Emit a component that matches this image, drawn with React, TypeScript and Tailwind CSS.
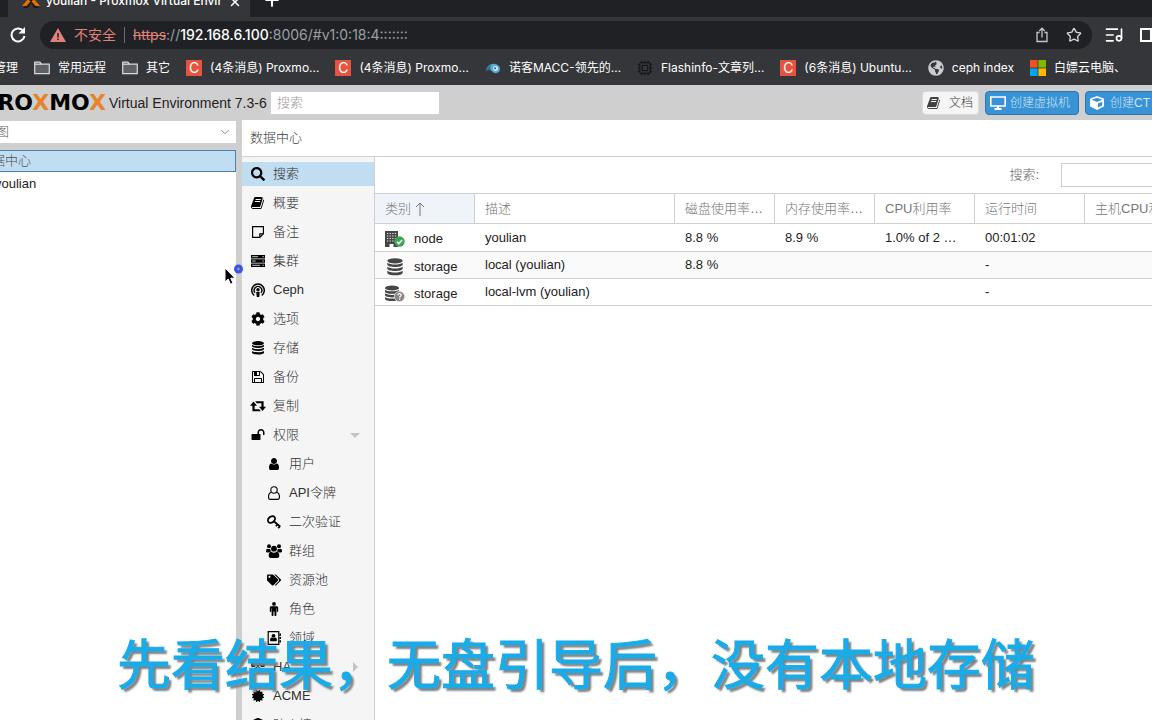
import type { ReactNode } from 'react';
import { ChevronDown, Cpu, ListMusic, Plus, Star, X } from 'lucide-react';
import { FaCertificate, FaCog, FaCube, FaGlobeAmericas, FaHeartbeat, FaSearch, FaShieldAlt, FaTags } from 'react-icons/fa';

const Glyph = ({ d, className = 'w-3.5 h-3.5' }: { d: string; className?: string }) => (
  <svg viewBox="0 0 1792 1792" className={className} fill="currentColor" aria-hidden="true">
    <path d={d} />
  </svg>
);

const BOOK =
  'M1639 478q40 57 18 129l-275 906q-19 64-76.5 107.5t-122.5 43.5h-923q-77 0-148.5-53.5t-99.5-131.5q-24-67-2-127 0-4 3-27t4-37q1-8-3-21.5t-3-19.5q2-11 8-21t16.5-23.5 16.5-23.5q23-38 45-91.5t30-91.5q3-10 .5-30t-.5-28q3-11 17-28t17-23q21-36 42-92t25-90q1-9-2.5-32t.5-28q4-13 22-30.5t22-22.5q19-26 42.5-84.5t27.5-96.5q1-8-3-25.5t-2-26.5q2-8 9-18t18-23 17-21q8-12 16.5-30.5t15-35 16-36 19.5-32 26.5-23.5 36-11.5 47.5 5.5l-1 3q38-9 51-9h761q74 0 114 56t18 130l-274 906q-36 119-71.5 153.5t-128.5 34.5h-869q-27 0-38 15-11 16-1 43 24 70 144 70h923q29 0 56-15.5t35-41.5l300-987q7-22 5-57 38 15 59 43zm-1064 2q-4 13 2 22.5t20 9.5h608q13 0 25.5-9.5t16.5-22.5l21-64q4-13-2-22.5t-20-9.5h-608q-13 0-25.5 9.5t-16.5 22.5zm-83 256q-4 13 2 22.5t20 9.5h608q13 0 25.5-9.5t16.5-22.5l21-64q4-13-2-22.5t-20-9.5h-608q-13 0-25.5 9.5t-16.5 22.5z';
const FLOPPY =
  'M512 1536h768v-384h-768v384zm896 0h128v-896q0-14-10-38.5t-20-34.5l-281-281q-10-10-34-20t-39-10v416q0 40-28 68t-68 28h-576q-40 0-68-28t-28-68v-416h-128v1280h128v-416q0-40 28-68t68-28h832q40 0 68 28t28 68v416zm-384-928v-320q0-13-9.5-22.5t-22.5-9.5h-192q-13 0-22.5 9.5t-9.5 22.5v320q0 13 9.5 22.5t22.5 9.5h192q13 0 22.5-9.5t9.5-22.5zm640 32v928q0 40-28 68t-68 28h-1344q-40 0-68-28t-28-68v-1344q0-40 28-68t68-28h928q40 0 88 20t76 48l280 280q28 28 48 76t20 88z';
const UNLOCK =
  'M1728 576v256q0 26-19 45t-45 19h-64q-26 0-45-19t-19-45v-256q0-106-75-181t-181-75-181 75-75 181v192h96q40 0 68 28t28 68v576q0 40-28 68t-68 28h-960q-40 0-68-28t-28-68v-576q0-40 28-68t68-28h672v-192q0-185 131.5-316.5t316.5-131.5 316.5 131.5 131.5 316.5z';
const USER =
  'M1536 1399q0 109-62.5 187t-150.5 78h-854q-88 0-150.5-78t-62.5-187q0-85 8.500-160.500t31.500-152 58.500-131 94-89 134.500-34.500q131 128 313 128t313-128q76 0 134.500 34.500t94 89 58.500 131 31.500 152 8.500 160.500zm-256-887q0 159-112.500 271.500t-271.500 112.500-271.500-112.500-112.500-271.500 112.500-271.500 271.500-112.500 271.500 112.500 112.500 271.500z';

const NoteIcon = () => (
  <svg viewBox="0 0 14 14" className="w-3.5 h-3.5" fill="none" stroke="currentColor" strokeWidth="1.2">
    <path d="M1.6 1.6h10.8v7.2l-3.6 3.6H1.6zM8.8 12.4V8.8h3.6" />
  </svg>
);

const ServerIcon = () => (
  <svg viewBox="0 0 14 14" className="w-3.5 h-3.5" aria-hidden="true">
    <path d="M0 1h14v3.4H0zM0 5.300h14v3.400H0zM0 9.600h14V13H0z" fill="currentColor" />
    <path d="M1.200 2.700h6M1.200 7h3.500M1.200 11.300h8" stroke="#f5f5f5" strokeWidth=".8" />
    <path d="M11.500 2.700h1.200M11.500 7h1.200M11.500 11.300h1.200" stroke="#f5f5f5" strokeWidth="1" />
  </svg>
);

const PodcastIcon = () => (
  <svg viewBox="0 0 14 14" className="w-3.5 h-3.5" fill="none" stroke="currentColor" aria-hidden="true">
    <path d="M3.300 12.500a6.300 6.300 0 1 1 7.400 0" strokeWidth="1.500" />
    <path d="M4 9.700a3.800 3.800 0 1 1 6 0" strokeWidth="1.400" />
    <circle cx="7" cy="6.800" r="1.700" fill="currentColor" stroke="none" />
    <path d="M5.200 9h3.600l-.6 5H5.800z" fill="currentColor" stroke="none" />
  </svg>
);

const RetweetIcon = () => (
  <svg viewBox="0 0 16 14" className="w-4 h-3.5" fill="currentColor" aria-hidden="true">
    <path d="M3.500 2.500L7 6.700H4.600v3.500h4.600l1.700 2.100H2.400V6.700H0z" />
    <path d="M12.500 12L9 7.800h2.400V4.300H6.800L5.100 2.200h8.500v5.600H16z" />
  </svg>
);

const DatabaseIcon = ({ className = 'w-3.5 h-3.5' }: { className?: string }) => (
  <svg viewBox="0 0 14 14" className={className} fill="currentColor" aria-hidden="true">
    <ellipse cx="7" cy="2.2" rx="6" ry="2.1" />
    <path d="M1 3.700c2 1.900 10 1.900 12 0v1.300c0 2.600-12 2.600-12 0z" />
    <path d="M1 6.800c2 1.900 10 1.900 12 0v1.300c0 2.600-12 2.600-12 0z" />
    <path d="M1 9.900c2 1.900 10 1.900 12 0v1.500c0 2.700-12 2.700-12 0z" />
  </svg>
);

const UserOutlineIcon = () => (
  <svg viewBox="0 0 14 14" className="w-3.5 h-3.5" fill="none" stroke="currentColor" strokeWidth="1.1">
    <circle cx="7" cy="4" r="3.2" />
    <path d="M4.4 6.3C2.2 7 1.5 9 1.5 11c0 1.500.8 2.400 2 2.400h7c1.200 0 2-.9 2-2.400 0-2-.7-4-2.900-4.700" />
  </svg>
);

const KeyIcon = () => (
  <svg viewBox="0 0 14 14" className="w-3.5 h-3.5" fill="none" stroke="currentColor" strokeWidth="1.800">
    <ellipse cx="4.500" cy="4.500" rx="3.900" ry="2.900" transform="rotate(-40 4.500 4.500)" />
    <path d="M6.800 6.200l6.500 5.600M8.900 11.200l1.800-2.200M11.200 13.200l1.700-2.100" />
  </svg>
);

const UsersIcon = () => (
  <svg viewBox="0 0 16 14" className="w-4 h-3.5" fill="currentColor" aria-hidden="true">
    <circle cx="3" cy="2.300" r="2" />
    <circle cx="13" cy="2.300" r="2" />
    <path d="M0 7.500C0 5.600.5 4.700 1.500 4.700c.8.500 1.800.5 2.700 0 0 1.200.4 2.100 1.100 2.800-1 0-1.700.3-2.300.9H1.300C.4 8.400 0 8.100 0 7.500zM16 7.500c0-1.900-.5-2.800-1.500-2.800-.8.500-1.800.5-2.700 0 0 1.200-.4 2.100-1.100 2.800 1 0 1.700.3 2.300.9h1.700c.9 0 1.300-.3 1.300-.9z" />
    <circle cx="8" cy="4.700" r="2.900" />
    <path d="M5.300 7.800c1.600 1.400 3.800 1.400 5.400 0 2 0 2.600 1.900 2.600 4 0 1.400-.9 2.200-2.100 2.200H4.800c-1.200 0-2.100-.8-2.100-2.200 0-2.100.6-4 2.600-4z" />
  </svg>
);

const MaleIcon = () => (
  <svg viewBox="0 0 14 14" className="w-3.5 h-3.5" fill="currentColor" aria-hidden="true">
    <circle cx="7" cy="1.900" r="1.900" />
    <path d="M4.300 4.200h5.400c.8 0 1.500.6 1.500 1.500v3.500c0 1-1.400 1-1.400 0V6.300h-.4v6.900c0 1.100-1.900 1.100-1.900 0V9.500h-1v3.700c0 1.100-1.900 1.100-1.900 0V6.300h-.4v2.900c0 1-1.400 1-1.400 0V5.700c0-.9.700-1.500 1.500-1.500z" />
  </svg>
);

const AddressBookIcon = () => (
  <svg viewBox="0 0 14 14" className="w-3.5 h-3.5" fill="currentColor" aria-hidden="true">
    <path d="M1.200.7h10.600v12.600H1.200z" fill="none" stroke="currentColor" strokeWidth="1.200" />
    <circle cx="6.500" cy="4.800" r="1.900" />
    <path d="M4.800 6.500c1 .8 2.400.8 3.400 0 1.300 0 1.700 1.200 1.700 2.700 0 .6-.4 1-1 1H4.100c-.6 0-1-.4-1-1 0-1.500.4-2.700 1.700-2.700zM12.400 2.500H14v2.200h-1.600zM12.400 5.900H14v2.200h-1.600zM12.400 9.300H14v2.200h-1.600z" />
  </svg>
);

const BuildingIcon = () => (
  <svg viewBox="0 0 20 18" className="w-5 h-[18px]" aria-hidden="true">
    <path d="M0 1h13v16H8.500v-3h-4v3H0z" fill="#464646" />
    <path
      d="M2 3.500h9.500M2 6h9.500M2 8.500h9.500M2 11h9.500"
      stroke="#e4e4e4"
      strokeWidth="1.200"
      strokeDasharray="1.300 1.300"
    />
    <circle cx="14.500" cy="11.500" r="5.200" fill="#3aa655" />
    <path d="M11.900 11.700l1.900 1.900 3.300-3.700" fill="none" stroke="#fff" strokeWidth="1.500" />
  </svg>
);

const UnknownStorageIcon = () => (
  <svg viewBox="0 0 20 18" className="w-5 h-[18px]" aria-hidden="true">
    <g fill="#464646">
      <ellipse cx="7" cy="3" rx="7" ry="2.400" />
      <path d="M0 4.700c2.300 2.200 11.700 2.200 14 0v1.700c0 3.200-14 3.200-14 0z" />
      <path d="M0 8.300c2.300 2.200 11.700 2.200 14 0v1.700c0 3.200-14 3.200-14 0z" />
      <path d="M0 11.900c2.300 2.200 11.700 2.200 14 0v1.800c0 3.200-14 3.200-14 0z" />
    </g>
    <circle cx="14.500" cy="11.500" r="5.200" fill="#888" stroke="#fff" strokeWidth=".6" />
    <path
      d="M12.900 10.300c.1-2.100 3.400-2.100 3.300-.1 0 1.100-1.600 1.200-1.600 2.400M14.600 13.600v1.200"
      fill="none"
      stroke="#fff"
      strokeWidth="1.200"
    />
  </svg>
);

const FolderIcon = () => (
  <svg viewBox="0 0 16 14" className="w-4 h-3.5" fill="#5f6063" stroke="#d9dadc" strokeWidth="1.200">
    <path d="M.7 12.700V1.200h5.200l1.500 2h7.900v9.500z" />
    <path d="M.7 3.200h7" />
  </svg>
);

const CIcon = () => (
  <span className="flex h-4 w-4 items-center justify-center bg-[#e5543f] text-sm leading-4 text-white">C</span>
);

const BirdIcon = () => (
  <svg viewBox="0 0 16 16" className="w-4 h-4" aria-hidden="true">
    <path d="M1 11c1-5 5-8 9-7 4 .5 6 4 4.500 7-1 2-4 3-6 1.500C6 10.500 4 8 1 11z" fill="#58a9d8" />
    <path d="M1 11c1-3 3-5 5-6-1 2-1 4 0 6-1.500-1.500-3-1.500-5 0z" fill="#2c6a97" />
    <circle cx="10.500" cy="8.500" r="2.400" fill="#dceef8" />
    <circle cx="10.200" cy="8.300" r="1" fill="#24506f" />
  </svg>
);

const WindowsIcon = () => (
  <svg viewBox="0 0 16 16" className="w-4 h-4" aria-hidden="true">
    <path d="M0 0h7.600v7.600H0z" fill="#f25022" />
    <path d="M8.400 0H16v7.600H8.400z" fill="#7fba00" />
    <path d="M0 8.400h7.600V16H0z" fill="#00a4ef" />
    <path d="M8.400 8.400H16V16H8.400z" fill="#ffb900" />
  </svg>
);

const bookmarks: { label: string; icon: ReactNode }[] = [
  { label: '常用远程', icon: <FolderIcon /> },
  { label: '其它', icon: <FolderIcon /> },
  { label: '(4条消息) Proxmo…', icon: <CIcon /> },
  { label: '(4条消息) Proxmo…', icon: <CIcon /> },
  { label: '诺客MACC-领先的…', icon: <BirdIcon /> },
  { label: 'Flashinfo-文章列…', icon: <Cpu className="w-4 h-4 text-[#17181a]" strokeWidth={2} /> },
  { label: '(6条消息) Ubuntu…', icon: <CIcon /> },
  { label: 'ceph index', icon: <FaGlobeAmericas className="w-4 h-4 text-[#c9cbce]" /> },
  { label: '白嫖云电脑、', icon: <WindowsIcon /> },
];

interface MenuItem {
  label: string;
  icon: ReactNode;
  child?: boolean;
  arrow?: 'down' | 'right';
}

const menu: MenuItem[] = [
  { label: '搜索', icon: <FaSearch className="w-3.5 h-3.5" /> },
  { label: '概要', icon: <Glyph d={BOOK} /> },
  { label: '备注', icon: <NoteIcon /> },
  { label: '集群', icon: <ServerIcon /> },
  { label: 'Ceph', icon: <PodcastIcon /> },
  { label: '选项', icon: <FaCog className="w-3.5 h-3.5" /> },
  { label: '存储', icon: <DatabaseIcon /> },
  { label: '备份', icon: <Glyph d={FLOPPY} /> },
  { label: '复制', icon: <RetweetIcon /> },
  { label: '权限', icon: <Glyph d={UNLOCK} />, arrow: 'down' },
  { label: '用户', icon: <Glyph d={USER} />, child: true },
  { label: 'API令牌', icon: <UserOutlineIcon />, child: true },
  { label: '二次验证', icon: <KeyIcon />, child: true },
  { label: '群组', icon: <UsersIcon />, child: true },
  { label: '资源池', icon: <FaTags className="w-3.5 h-3.5" />, child: true },
  { label: '角色', icon: <MaleIcon />, child: true },
  { label: '领域', icon: <AddressBookIcon />, child: true },
  { label: 'HA', icon: <FaHeartbeat className="w-3.5 h-3.5" />, arrow: 'right' },
  { label: 'ACME', icon: <FaCertificate className="w-3 h-3" /> },
  { label: '防火墙', icon: <FaShieldAlt className="w-3.5 h-3.5" /> },
];

const columns = [
  { label: '类别', width: 'w-[100px]' },
  { label: '描述', width: 'w-[200px]' },
  { label: '磁盘使用率…', width: 'w-[100px]' },
  { label: '内存使用率…', width: 'w-[100px]' },
  { label: 'CPU利用率', width: 'w-[100px]' },
  { label: '运行时间', width: 'w-[110px]' },
  { label: '主机CPU利用率', width: '' },
];

const rows = [
  { icon: <BuildingIcon />, type: 'node', cells: ['youlian', '8.8 %', '8.9 %', '1.0% of 2 …', '00:01:02', ''] },
  {
    icon: <DatabaseIcon className="w-[18px] h-[18px] text-[#464646]" />,
    type: 'storage',
    cells: ['local (youlian)', '8.8 %', '', '', '-', ''],
  },
  { icon: <UnknownStorageIcon />, type: 'storage', cells: ['local-lvm (youlian)', '', '', '', '-', ''] },
];

const BrowserChrome = () => (
  <div className="shrink-0 bg-[#35363a] font-['Inter','Noto_Sans_CJK_SC',sans-serif] font-normal text-white">
    {/* Tab strip */}
    <div className="flex h-[17px] overflow-hidden bg-[#202124]">
      <div className="w-2 shrink-0 rounded-br-lg bg-[#202124]" />
      <div className="flex w-[242px] shrink-0 items-end bg-[#35363a] pb-2 pl-3.5">
        <svg viewBox="0 0 18 16" className="h-4 w-[18px] shrink-0" aria-hidden="true">
          <path d="M1 1h5l3 5 3-5h5l-5 7 5 7h-5l-3-5-3 5H1l5-7z" fill="#1b1b1b" />
          <path d="M0 13h4.500l4-4.500L6 6zM18 13h-4.500l-4-4.500L12 6z" fill="#e57000" />
        </svg>
        <span className="ml-1.5 w-[176px] overflow-hidden text-xs leading-4 font-medium whitespace-nowrap">
          youlian - Proxmox Virtual Envir
        </span>
        <button aria-label="关闭标签页" className="ml-1.5">
          <X className="h-3.5 w-3.5" strokeWidth={2.5} />
        </button>
      </div>
      <button aria-label="新标签页" className="-mt-2.5 ml-3 self-start">
        <Plus className="h-5 w-5" strokeWidth={2.5} />
      </button>
    </div>

    {/* Address bar */}
    <div className="flex h-9 items-center overflow-hidden">
      <button aria-label="刷新" className="ml-2.5 shrink-0">
        <svg viewBox="0 0 16 16" className="h-4 w-4" fill="none" stroke="currentColor" strokeWidth="2">
          <path d="M13.600 4.500A6.500 6.500 0 1 0 14.500 9" />
          <path d="M15 0v6.500H8.500z" fill="currentColor" stroke="none" />
        </svg>
      </button>
      <div className="ml-3.5 flex h-7 flex-1 items-center rounded-full bg-[#202124] px-2.5 text-sm">
        <svg viewBox="0 0 16 14" className="h-3.5 w-4" aria-hidden="true">
          <path d="M8 0l8 14H0z" fill="#e0827a" />
          <path d="M8 5v4.500M8 10.500V12" stroke="#202124" strokeWidth="1.500" />
        </svg>
        <span className="ml-2 text-[#e0827a]">不安全</span>
        <span className="mx-2 h-4 w-px bg-[#6b6d71]" />
        <a href="https://192.168.6.100:8006/#v1:0:18:4:::::::" className="whitespace-nowrap text-[#9aa0a6]">
          <span className="text-[#e0827a] line-through">https</span>://
          <span className="font-medium text-white">192.168.6.100</span>:8006/#v1:0:18:4:::::::
        </a>
        <button aria-label="分享" className="ml-auto">
          <svg viewBox="0 0 16 16" className="h-4 w-4" fill="none" stroke="#c4c7ca" strokeWidth="1.300">
            <path d="M5.500 5.500H3v9h10v-9h-2.500M8 10.500V1.500M5.200 4L8 1.200 10.800 4" />
          </svg>
        </button>
        <button aria-label="收藏" className="ml-4">
          <Star className="h-4 w-4 text-[#d5d7da]" />
        </button>
      </div>
      <button aria-label="媒体" className="ml-3 shrink-0">
        <ListMusic className="h-5 w-5" />
      </button>
      <div className="ml-4 h-3.5 w-3 shrink-0 border-2 border-r-2 border-white" />
    </div>

    {/* Bookmarks */}
    <nav className="flex h-8 items-center gap-4 overflow-hidden pb-0.5 text-xs whitespace-nowrap">
      <a href="#manage" className="-ml-1.5 w-6">
        管理
      </a>
      {bookmarks.map((bookmark, i) => (
        <a key={i} href="#bookmark" className="flex items-center gap-2">
          {bookmark.icon}
          {bookmark.label}
        </a>
      ))}
    </nav>
  </div>
);

const Header = () => (
  <header className="flex h-[35px] shrink-0 items-center overflow-hidden bg-[#cfcfcf] whitespace-nowrap">
    <div className="flex w-[106px] shrink-0 justify-end overflow-hidden font-['DejaVu_Sans',sans-serif] text-[22px] leading-6 font-bold text-black">
      <span>
        PRO<span className="text-[#e6842b]">X</span>MO<span className="text-[#e6842b]">X</span>
      </span>
    </div>
    <span className="ml-[3px] w-[156px] text-sm text-[#222]">Virtual Environment 7.3-6</span>
    <input
      aria-label="搜索"
      placeholder="搜索"
      className="ml-1.5 h-[22px] w-[168px] bg-white px-1.5 text-[13px] outline-none placeholder:text-[#9a9a9a]"
    />
    <div className="-mr-3 ml-auto flex gap-1.5">
      <button className="flex h-6 w-[57px] items-center gap-2 rounded-sm border border-[#dcdcdc] bg-[#f5f5f5] px-1 text-xs text-[#404040]">
        <Glyph d={BOOK} className="h-3.5 w-3.5 shrink-0" />
        文档
      </button>
      <button className="flex h-6 w-[94px] items-center gap-1 rounded-sm border border-[#2c76b0] bg-[#3892d4] px-1 text-xs text-[#cfe6f7]">
        <svg viewBox="0 0 16 14" className="h-3.5 w-4" fill="none" stroke="#fff" strokeWidth="1.600">
          <path d="M.8 1h14.400v9H.8z" />
          <path d="M4.500 13h7M8 10v3" strokeWidth="2" />
        </svg>
        创建虚拟机
      </button>
      <button className="flex h-6 w-[79px] items-center gap-1.5 rounded-sm border border-[#2c76b0] bg-[#3892d4] px-1 text-xs text-[#cfe6f7]">
        <FaCube className="h-3.5 w-3.5 text-white" />
        创建CT
      </button>
    </div>
  </header>
);

const ResourceTree = () => (
  <aside className="w-[236px] shrink-0 overflow-hidden text-[13px] whitespace-nowrap">
    <button className="mt-px flex h-[22px] w-full items-center justify-between bg-white pr-1 text-[#606060]">
      <span className="-ml-[17px]">视图</span>
      <ChevronDown className="h-3.5 w-3.5 text-[#777]" strokeWidth={1.5} />
    </button>
    <div className="mt-[7px] h-full bg-white">
      <ul>
        <li className="-ml-px flex h-[22px] items-center border border-[#4a83b0] bg-[#c1ddf1] text-[#505050]">
          <span className="-ml-[21px]">数据中心</span>
        </li>
        <li className="flex h-6 items-center text-[#222]">
          <span className="-ml-[5px]">youlian</span>
        </li>
      </ul>
    </div>
  </aside>
);

const SideMenu = () => (
  <nav className="w-[133px] shrink-0 overflow-hidden border-r border-[#cfcfcf] bg-[#f5f5f5] pt-[5px]">
    <ul className="flex flex-col gap-[5px]">
      {menu.map((item, i) => (
        <li key={item.label}>
          <a
            href={`#${item.label}`}
            className={`flex h-6 items-center gap-1.5 pr-3.5 text-[13px] text-[#303030] ${
              i === 0 ? 'bg-[#c1ddf1]' : ''
            } ${item.child ? 'pl-6' : 'pl-2'}`}
          >
            <span className="flex w-4 shrink-0 justify-center text-black">{item.icon}</span>
            <span className="ml-px">{item.label}</span>
            {item.arrow === 'down' && (
              <span className="ml-auto border-x-5 border-t-5 border-x-transparent border-t-[#c4c4c4]" />
            )}
            {item.arrow === 'right' && (
              <span className="mr-0.5 ml-auto border-y-5 border-l-5 border-y-transparent border-l-[#c4c4c4]" />
            )}
          </a>
        </li>
      ))}
    </ul>
  </nav>
);

const ResourceGrid = () => (
  <section className="min-w-0 flex-1 overflow-hidden bg-white text-[13px]">
    <div className="flex h-9 items-center justify-end overflow-hidden">
      <label htmlFor="grid-search" className="mr-[22px] text-[#666]">
        搜索:
      </label>
      <input id="grid-search" className="-mr-1 h-6 w-[95px] shrink-0 border border-[#cfcfcf] px-2 outline-none" />
    </div>
    <table className="w-full table-fixed border-separate border-spacing-0 text-left whitespace-nowrap">
      <thead>
        <tr className="h-[31px] text-[#777]">
          {columns.map((column, i) => (
            <th
              key={column.label}
              className={`overflow-hidden border-y border-r border-[#cfcfcf] pl-2.5 font-light last:border-r-0 ${column.width} ${
                i === 0 ? 'bg-[#eff4fb]' : ''
              }`}
            >
              <span className="flex items-center">
                {column.label}
                {i === 0 && (
                  <svg viewBox="0 0 10 14" className="ml-1 h-3.5 w-2.5" fill="none" stroke="currentColor">
                    <path d="M5 14V1M1 5l4-4 4 4" />
                  </svg>
                )}
              </span>
            </th>
          ))}
        </tr>
      </thead>
      <tbody>
        {rows.map((row, i) => (
          <tr key={i} className="h-[27px] text-[#222] first:h-7 even:bg-[#fafafa]">
            <td className="border-b border-[#cfcfcf] pl-2.5">
              <span className="flex items-center pt-[3px]">
                <span className="mr-[9px] flex w-5 justify-center">{row.icon}</span>
                {row.type}
              </span>
            </td>
            {row.cells.map((cell, j) => (
              <td key={j} className="border-b border-[#cfcfcf] pl-2.5">
                {cell}
              </td>
            ))}
          </tr>
        ))}
      </tbody>
    </table>
  </section>
);

const App = () => {
  return (
    <div className="relative flex h-screen flex-col overflow-hidden bg-[#cfcfcf] font-['Liberation_Sans','Noto_Sans_CJK_SC',sans-serif] font-light">
      <BrowserChrome />
      <Header />
      <div className="flex min-h-0 flex-1">
        <ResourceTree />
        <main className="ml-1.5 flex min-w-0 flex-1 flex-col bg-white">
          <h1 className="flex h-[37px] shrink-0 items-center border-b border-[#cfcfcf] pl-2 text-[13px] text-[#404040]">
            数据中心
          </h1>
          <div className="flex min-h-0 flex-1">
            <SideMenu />
            <ResourceGrid />
          </div>
        </main>
      </div>

      {/* Mouse pointer with the busy dot */}
      <svg viewBox="0 0 24 26" className="absolute top-[262px] left-[221px] h-[26px] w-6" aria-hidden="true">
        <path d="M4 6v14l3.200-3 2.300 5.200 2.500-1-2.300-5H14z" fill="#000" stroke="#fff" />
        <circle cx="17.500" cy="7" r="4.500" fill="#3d55e0" />
        <circle cx="17.500" cy="7" r="1.200" fill="#8fa0ff" />
      </svg>

      {/* Subtitle */}
      <p className="absolute inset-x-0 bottom-[18px] text-center font-['Noto_Sans_CJK_SC',sans-serif] text-[54px] leading-[80px] font-normal whitespace-nowrap text-[#1aabe8] [-webkit-text-stroke:1px_#1aabe8] [text-shadow:3px_3px_2px_#808080]">
        先看结果，无盘引导后，没有本地存储
      </p>
    </div>
  );
};

export default App;
